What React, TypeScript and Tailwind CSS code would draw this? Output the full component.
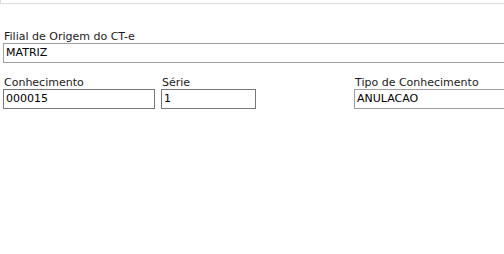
function Field({
  label,
  value,
  width,
  dark,
}: {
  label: string;
  value: string;
  width: string;
  dark?: boolean;
}) {
  return (
    <div className="flex flex-col">
      <label className="pl-[1px] text-[11px] leading-[13px] text-[#1a1a1a]">{label}</label>
      <div
        className={`${width} h-[20px] border ${
          dark ? "border-[#777777]" : "border-[#a0a0a0]"
        } bg-white pl-[2px] text-[11px] leading-[18px] text-black`}
      >
        {value}
      </div>
    </div>
  );
}

export default function App() {
  return (
    <div
      className="h-[254px] w-[504px] overflow-hidden bg-white"
      style={{ fontFamily: '"DejaVu Sans", Verdana, sans-serif' }}
    >
      {/* Top panel edge */}
      <div className="h-[4px] w-full border-b border-l border-[#dcdcdc]" />

      <div className="pl-[3px] pt-[26px]">
        <Field label="Filial de Origem do CT-e" value="MATRIZ" width="w-[520px]" />

        <div className="mt-[13px] flex">
          <Field label="Conhecimento" value="000015" width="w-[152px]" dark />
          <div className="ml-[6px]">
            <Field label="Série" value="1" width="w-[95px]" dark />
          </div>
          <div className="ml-[98px]">
            <Field label="Tipo de Conhecimento" value="ANULACAO" width="w-[170px]" />
          </div>
        </div>
      </div>
    </div>
  );
}
